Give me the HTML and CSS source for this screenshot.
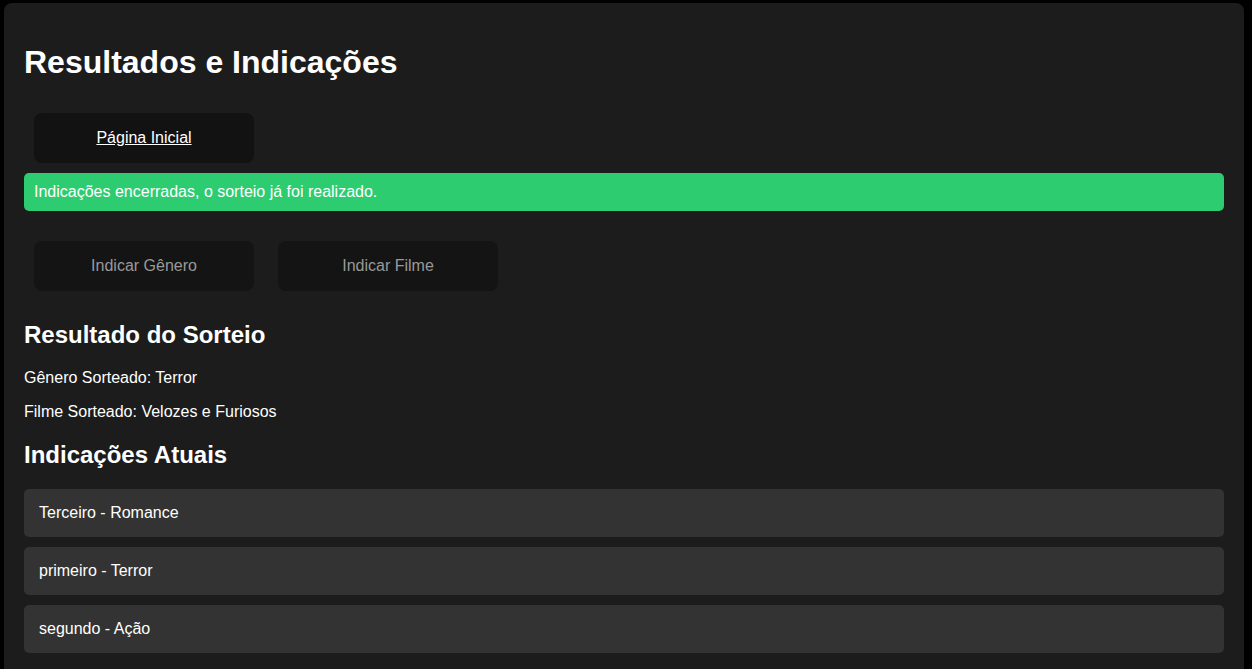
FILE: index.html
```html
<!DOCTYPE html>
<html lang="pt-BR">
<head>
<meta charset="utf-8">
<title>Resultados e Indicações</title>
<link rel="stylesheet" href="styles.css">
</head>
<body>
<div class="container">
  <h1>Resultados e Indicações</h1>
  <div class="btn-row">
    <a class="btn" href="#">Página Inicial</a>
  </div>
  <div class="alert">Indicações encerradas, o sorteio já foi realizado.</div>
  <div class="btn-row spaced">
    <button class="btn disabled" disabled>Indicar Gênero</button>
    <button class="btn disabled" disabled>Indicar Filme</button>
  </div>
  <h2>Resultado do Sorteio</h2>
  <p>Gênero Sorteado: Terror</p>
  <p>Filme Sorteado: Velozes e Furiosos</p>
  <h2>Indicações Atuais</h2>
  <ul class="list">
    <li>Terceiro - Romance</li>
    <li>primeiro - Terror</li>
    <li>segundo - Ação</li>
  </ul>
</div>
</body>
</html>
```

FILE: styles.css
```css
html, body {
  margin: 0;
  background: #000;
}
body {
  padding: 3px 0 0 4px;
  font-family: "Liberation Sans", Arial, sans-serif;
  color: #fff;
  font-size: 16px;
}
.container {
  width: 1240px;
  box-sizing: border-box;
  background: #1c1c1c;
  border-radius: 8px;
  padding: 20px 20px 20px 20px;
  min-height: 700px;
}
h1 {
  font-size: 32px;
  font-weight: bold;
  margin: 21.44px 0;
}
h2 {
  font-size: 24px;
  font-weight: bold;
  margin: 19.92px 0;
}
p {
  margin: 16px 0;
}
.btn-row {
  display: flex;
  gap: 4px;
}
.btn-row.spaced {
  margin-top: 20px;
}
.btn {
  display: flex;
  align-items: center;
  justify-content: center;
  box-sizing: border-box;
  width: 220px;
  height: 50px;
  margin: 10px;
  background: #121212;
  border: none;
  border-radius: 8px;
  color: #fff;
  font-family: inherit;
  font-size: 16px;
  text-decoration: underline;
}
.btn.disabled {
  color: #999;
  text-decoration: none;
  background: #141414;
}
.alert {
  background: #2ecc71;
  color: #fff;
  padding: 10px;
  border-radius: 5px;
  line-height: 18px;
}
.list {
  list-style: none;
  margin: 0;
  padding: 0;
}
.list li {
  background: #333;
  border-radius: 5px;
  padding: 15px;
  margin-bottom: 10px;
}
```
